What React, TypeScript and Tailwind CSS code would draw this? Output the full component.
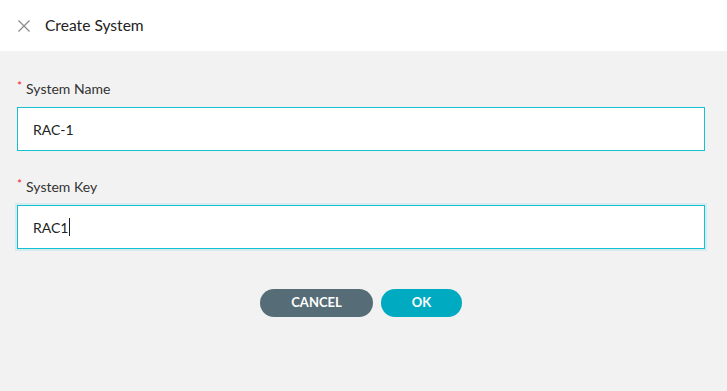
const Field = ({ label, value, focused }: { label: string; value: string; focused?: boolean }) => (
  <div className="flex flex-col">
    <label className="flex items-center h-[20px] text-[14px] text-[#333]">
      <span className="text-[#f5222d] text-[12px] mr-[4px] -mt-[4px]">*</span>
      {label}
    </label>
    <div
      className={
        "mt-[9px] h-[44px] flex items-center bg-white border border-[#14c1d2] pl-[15px] text-[14px] text-[#222] " +
        (focused ? "shadow-[0_0_0_2px_rgba(20,193,210,0.12)]" : "")
      }
    >
      {value}
      {focused && <span className="w-px h-[18px] bg-[#222] ml-px" />}
    </div>
  </div>
);

const App = () => {
  return (
    <div className="w-[727px] h-[391px] bg-[#f2f2f2] font-['Lato','Open_Sans',sans-serif] flex flex-col">
      <div className="h-[51px] bg-white flex items-center pl-[18px]">
        <svg width="12" height="12" viewBox="0 0 12 12" className="text-[#8a8a8a]">
          <path d="M0.5 0.5 L11.5 11.5 M11.5 0.5 L0.5 11.5" stroke="currentColor" strokeWidth="1.2" />
        </svg>
        <span className="ml-[15px] text-[15.6px] text-[#222]">Create System</span>
      </div>
      <div className="flex flex-col gap-[25px] pl-[17px] pr-[22px] pt-[27px]">
        <Field label="System Name" value="RAC-1" />
        <Field label="System Key" value="RAC1" focused />
      </div>
      <div className="flex justify-center gap-[8px] mt-[40px] pr-[5px]">
        <button className="w-[113px] h-[28px] rounded-full bg-[#566d78] text-white text-[13px] font-bold">
          CANCEL
        </button>
        <button className="w-[81px] h-[28px] rounded-full bg-[#00abc2] text-white text-[13px] font-bold">
          OK
        </button>
      </div>
    </div>
  );
};

export default App;
